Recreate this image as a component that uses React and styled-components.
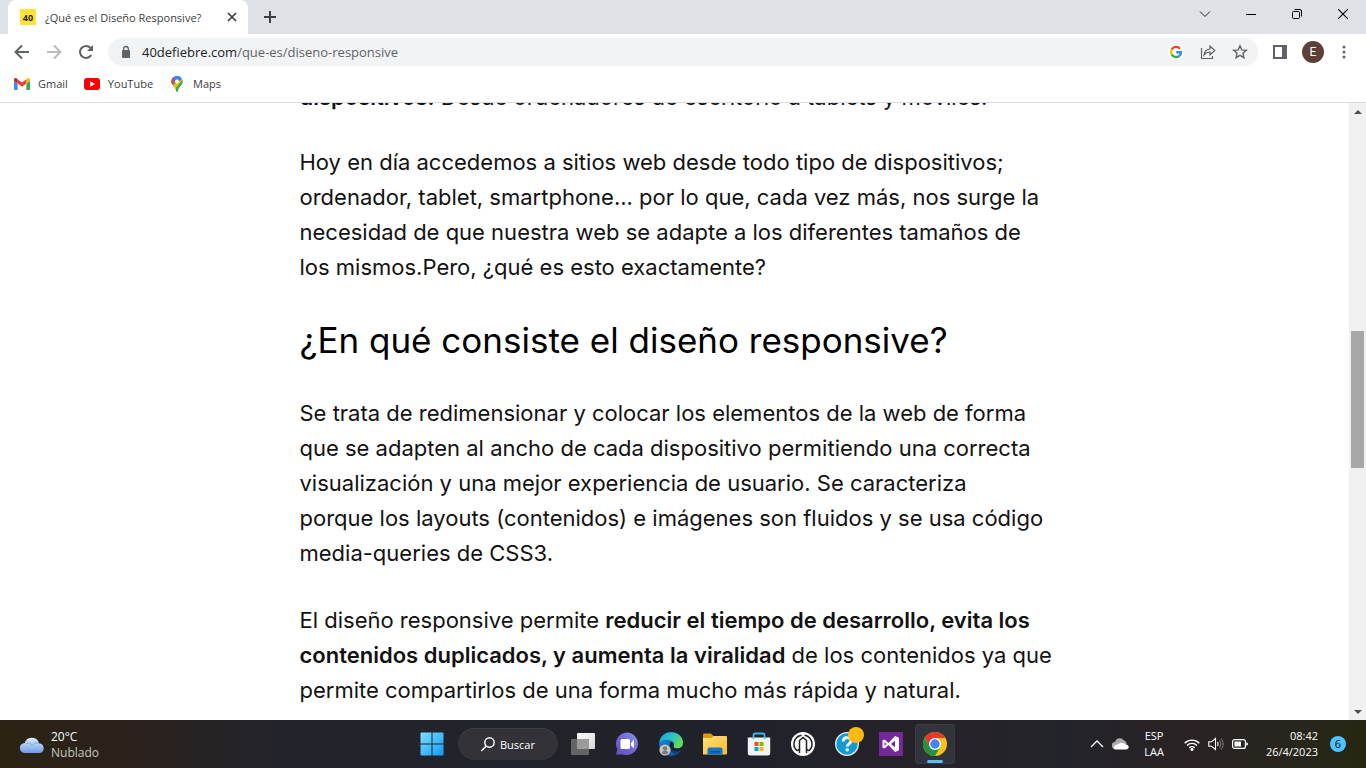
import React from "react";
import styled, { createGlobalStyle } from "styled-components";

const uiFont = '"Open Sans", "Noto Sans", sans-serif';

const Global = createGlobalStyle`
  * { box-sizing: border-box; }
  body { margin: 0; background: #fff; font-family: ${uiFont}; }
  button { border: 0; padding: 0; background: none; font: inherit; color: inherit; }
  svg { display: block; flex: none; }
`;

const Screen = styled.div`
  display: flex;
  flex-direction: column;
  height: 100vh;
  min-height: 400px;
  overflow: hidden;
`;

const TabStrip = styled.header`
  display: flex;
  flex: none;
  height: 34px;
  padding-left: 8px;
  background: #dee1e6;
`;

const Tab = styled.div`
  display: flex;
  align-items: center;
  width: 240px;
  padding: 0 8px 0 12px;
  background: #fff;
  border-radius: 8px 8px 0 0;
  font-size: 11px;
  color: #3c4043;
`;

const Favicon = styled.span`
  display: grid;
  place-items: center;
  width: 16px;
  height: 16px;
  margin-right: 9px;
  background: #ffe234;
  color: #222;
  font: 700 9px ${uiFont};
`;

const TabTitle = styled.span`
  flex: 1;
  white-space: nowrap;
  overflow: hidden;
`;

const IconButton = styled.button`
  display: grid;
  place-items: center;
  flex: none;
  width: ${(p) => p.$w || 32}px;
  height: ${(p) => p.$h || 28}px;
  color: ${(p) => p.$color || "#5f6368"};
`;

const NewTab = styled(IconButton)`
  margin-left: 8px;
  height: 34px;
  width: 28px;
`;

const WindowControls = styled.div`
  display: flex;
  margin-left: auto;
`;

const Toolbar = styled.div`
  display: flex;
  align-items: center;
  flex: none;
  height: 36px;
  padding: 0 0 0 6px;
`;

const Omnibox = styled.div`
  display: flex;
  align-items: center;
  flex: 1;
  height: 28px;
  margin-left: 6px;
  padding: 0 2px 0 12px;
  border-radius: 14px;
  background: #f1f3f4;
`;

const Url = styled.a`
  flex: 1;
  margin-left: 10px;
  font-size: 13px;
  color: #5f6368;
  text-decoration: none;
  white-space: nowrap;
  b { font-weight: 400; color: #202124; }
`;

const Avatar = styled.span`
  display: grid;
  place-items: center;
  width: 22px;
  height: 22px;
  border-radius: 50%;
  background: #5d4037;
  color: #fff;
  font: 12px Roboto, sans-serif;
`;

const Bookmarks = styled.nav`
  display: flex;
  align-items: center;
  flex: none;
  gap: 16px;
  height: 33px;
  padding: 0 14px 4px;
  border-bottom: 1px solid #dadce0;
`;

const Bookmark = styled.a`
  display: flex;
  align-items: center;
  gap: 8px;
  font-size: 11px;
  line-height: 20px;
  color: #3c4043;
  text-decoration: none;
`;

const Viewport = styled.div`
  display: flex;
  flex: 1;
  min-height: 0;
`;

const Page = styled.main`
  flex: 1;
  min-width: 0;
  overflow: hidden;
  background: #fff;
`;

const Article = styled.article`
  max-width: 750px;
  margin: -23px auto 0;
  font-family: Inter, sans-serif;
  color: #121212;
`;

const Paragraph = styled.p`
  margin: 0 0 32px;
  font-size: 22px;
  line-height: 35px;
  white-space: nowrap;
  strong { font-weight: 600; }
`;

const Lead = styled(Paragraph)`
  margin-bottom: 30px;
`;

const Heading = styled.h2`
  margin: 0 0 32px;
  font-size: 35px;
  line-height: 47px;
  font-weight: 400;
  color: #000;
  white-space: nowrap;
`;

const Scrollbar = styled.div`
  display: flex;
  flex-direction: column;
  flex: none;
  width: 17px;
  background: #f1f1f1;
`;

const TrackSpace = styled.div`
  flex: ${(p) => p.$grow} 1 0;
`;

const Thumb = styled.div`
  flex: 137 1 0;
  margin: 0 2px;
  background: #a8a8a8;
`;

const Taskbar = styled.footer`
  display: grid;
  grid-template-columns: 1fr auto 1fr;
  align-items: center;
  flex: none;
  height: 48px;
  background: linear-gradient(90deg, #2b2414 0%, #2a211c 10%, #23242b 20%, #20222b 55%, #272228 68%, #23242b 78%, #2a2224 87%, #262719 97%, #26260f 100%);
  color: #fff;
`;

const Weather = styled.button`
  display: flex;
  align-items: center;
  gap: 6px;
  padding: 2px 0 0 20px;
  text-align: left;
  font-size: 12px;
  line-height: 16px;
  span { display: block; }
  span + span { color: #c8c6c2; }
`;

const Apps = styled.div`
  display: flex;
  align-items: center;
  gap: 4px;
`;

const AppButton = styled.button`
  display: flex;
  flex-direction: column;
  align-items: center;
  justify-content: center;
  width: 40px;
  height: 40px;
  border-radius: 4px;
  background: ${(p) => (p.$active ? "#32343b" : "none")};
  box-shadow: ${(p) => (p.$active ? "inset 0 0 0 1px #3a3c42" : "none")};
`;

const ActiveMark = styled.i`
  width: 16px;
  height: 3px;
  margin: 4px 0 -7px;
  border-radius: 2px;
  background: #4cc2ff;
`;

const Search = styled.button`
  display: flex;
  align-items: center;
  justify-content: center;
  gap: 4px;
  width: 100px;
  height: 32px;
  margin: 0 1px 0 2px;
  border-radius: 16px;
  background: #323238;
  box-shadow: inset 0 1px 0 #3d3d43;
  font-size: 11px;
`;

const Tray = styled.div`
  display: flex;
  align-items: center;
  justify-content: flex-end;
  padding-right: 20px;
  font-size: 11px;
  line-height: 16px;
`;

const TrayGroup = styled.div`
  display: flex;
  align-items: center;
  gap: 8px;
`;

const TrayText = styled.button`
  margin: 0 ${(p) => p.$right}px 0 ${(p) => p.$left}px;
  text-align: ${(p) => p.$align};
  span { display: block; }
`;

const Badge = styled.span`
  display: grid;
  place-items: center;
  width: 16px;
  height: 16px;
  border-radius: 50%;
  background: #4cc2ff;
  color: #111;
`;

const Svg = ({ w = 24, h = w, box, children, ...rest }) => (
  <svg width={w} height={h} viewBox={box || `0 0 ${w} ${h}`} fill="none" aria-hidden="true" {...rest}>
    {children}
  </svg>
);

const BackArrow = () => (
  <Svg w={16} stroke="currentColor" strokeWidth="2"><path d="M15 8H2M8 1.500 1.500 8 8 14.500" /></Svg>
);
const ForwardArrow = () => (
  <Svg w={16} stroke="currentColor" strokeWidth="2"><path d="M1 8h13M8 1.500 14.500 8 8 14.500" /></Svg>
);
const Reload = () => (
  <Svg w={16}>
    <path d="M13.200 11A6 6 0 1 1 12.400 3.800L14 5.400" stroke="currentColor" strokeWidth="2" />
    <path d="M15 1v6H9z" fill="currentColor" />
  </Svg>
);
const Lock = () => (
  <Svg w={12} h={14}>
    <rect x="2" y="5" width="8" height="8" rx="1" fill="#5f6368" />
    <path d="M3.700 5V3.800a2.300 2.300 0 0 1 4.600 0V5" stroke="#5f6368" strokeWidth="1.300" />
  </Svg>
);
const GoogleG = () => (
  <Svg w={16} box="0 0 16 16">
    <circle cx="8" cy="8" r="8" fill="#fff" />
    <g strokeWidth="2.400">
      <path d="M12 4.700A5 5 0 0 0 3.700 5.500" stroke="#ea4335" />
      <path d="M3.700 5.500a5 5 0 0 0 0 5" stroke="#fbbc05" />
      <path d="M3.700 10.500a5 5 0 0 0 7.600 1.300" stroke="#34a853" />
      <path d="M11.300 11.800A5 5 0 0 0 13 8.200H8.200" stroke="#4285f4" />
    </g>
  </Svg>
);
const Share = () => (
  <Svg w={16} stroke="currentColor" strokeWidth="1.200">
    <path d="M1.500 4v10.500h11V12M4 11c.5-4 3-5.800 6-6V2.200L14.800 6.500 10 10.800V8C7.500 8 5.500 9 4 11z" />
  </Svg>
);
const Star = () => (
  <Svg w={16} stroke="currentColor" strokeWidth="1.400">
    <path d="m8 1.800 1.800 4.100 4.500.4-3.400 3 1 4.400L8 11.400l-3.900 2.300 1-4.400-3.400-3 4.500-.4z" />
  </Svg>
);
const SidePanel = () => (
  <Svg w={14}><path d="M0 0h14v14H0zM2 2v10h7V2z" fill="currentColor" fillRule="evenodd" /></Svg>
);
const Dots = () => (
  <Svg w={4} h={14} fill="currentColor"><circle cx="2" cy="2" r="1.500" /><circle cx="2" cy="7" r="1.500" /><circle cx="2" cy="12" r="1.500" /></Svg>
);
const Gmail = () => (
  <Svg w={16} h={12} box="0 0 16 12">
    <path d="M1 12h2.600V5.500L0 2.800V11a1 1 0 0 0 1 1z" fill="#4285f4" />
    <path d="M12.400 12H15a1 1 0 0 0 1-1V2.800l-3.600 2.700z" fill="#34a853" />
    <path d="M12.400 1.300v4.200L16 2.800V1.600C16 .2 14.400-.5 13.300.4z" fill="#fbbc04" />
    <path d="M3.600 5.500V1.300L8 4.600l4.400-3.300v4.200L8 8.800z" fill="#ea4335" />
    <path d="M0 1.600v1.200l3.600 2.700V1.300L2.700.4C1.600-.5 0 .2 0 1.600z" fill="#c5221f" />
  </Svg>
);
const YouTube = () => (
  <Svg w={16} h={12}><rect width="16" height="12" rx="3" fill="#f00" /><path d="M6.200 3.300v5.400L11 6z" fill="#fff" /></Svg>
);
const Maps = () => (
  <Svg w={16} box="0 0 16 16">
    <clipPath id="pin"><path d="M8 0a5.500 5.500 0 0 0-5.500 5.500C2.500 9.500 7 11 7.200 15.200q.8 1.400 1.600 0C9 11 13.500 9.500 13.500 5.500A5.500 5.500 0 0 0 8 0z" /></clipPath>
    <g clipPath="url(#pin)">
      <path d="M0 0h16v16H0z" fill="#34a853" />
      <path d="M0 12 13 0H0z" fill="#1a73e8" />
      <path d="M0 0 8 5 3 10 0 7z" fill="#4285f4" />
      <path d="M0 2 4 1.500 7 4 2 9z" fill="#ea4335" />
      <path d="m3 10.500 8.500-8.500 3 2L6 13z" fill="#fbbc04" />
      <path d="M5 15 14 3v13z" fill="#34a853" />
      <path d="M6 0h7v3L9 6 5 3z" fill="#4285f4" />
    </g>
    <circle cx="8" cy="5.500" r="2" fill="#fff" />
  </Svg>
);
const WeatherCloud = () => (
  <Svg w={25} h={17}>
    <defs><linearGradient id="wc" x1="0" y1="0" x2="0" y2="1"><stop stopColor="#dbe9fb" /><stop offset=".6" stopColor="#9dbdf0" /><stop offset="1" stopColor="#6f9be4" /></linearGradient></defs>
    <path d="M5 16a5 5 0 0 1-.3-10A7.500 7.500 0 0 1 19 6.200 5 5 0 0 1 20 16z" fill="url(#wc)" />
    <path d="M6 6.500c3-1 5 0 6 2 1.500-2 4-3 7-2.300" stroke="#7fa9ea" />
  </Svg>
);
const Windows = () => (
  <Svg w={24}>
    <defs><linearGradient id="win" x1="0" y1="0" x2="1" y2="1"><stop stopColor="#7be0ff" /><stop offset="1" stopColor="#109bf5" /></linearGradient></defs>
    <path d="M.5 1.500A1 1 0 0 1 1.500.5h10v11H.5zM12.500.5h10a1 1 0 0 1 1 1v10h-11zM.5 12.500h11v11h-10a1 1 0 0 1-1-1zM12.500 12.500h11v10a1 1 0 0 1-1 1h-10z" fill="url(#win)" />
  </Svg>
);
const SearchGlyph = () => (
  <Svg w={16} stroke="#fff" strokeWidth="1.500" strokeLinecap="round"><circle cx="9.500" cy="6.500" r="4.700" /><path d="M6 10.200 1.800 14.500" /></Svg>
);
const TaskView = () => (
  <Svg w={24}>
    <defs><linearGradient id="tv" x1="0" y1="0" x2="1" y2="1"><stop stopColor="#fff" /><stop offset="1" stopColor="#d5d5d5" /></linearGradient></defs>
    <rect x="6" y="1" width="18" height="16" rx="1" fill="url(#tv)" />
    <rect x="0" y="7" width="18" height="16" rx="1" fill="#646464" />
    <path d="M6 7h12v10H6z" fill="#9b9b9b" />
  </Svg>
);
const Teams = () => (
  <Svg w={24}>
    <defs><linearGradient id="tm" x1="0" y1="1" x2="1" y2="0"><stop stopColor="#6150c0" /><stop offset=".5" stopColor="#7465cf" /><stop offset="1" stopColor="#7fa3ea" /></linearGradient></defs>
    <path d="M12 .5a11.300 11.300 0 1 1-4 22H1l1.300-5.300A11.300 11.300 0 0 1 12 .5z" fill="url(#tm)" />
    <rect x="5.500" y="7" width="9.500" height="10" rx="1.500" fill="#fff" /><path d="m16 11 3-3.500v9L16 13.500z" fill="#fff" />
  </Svg>
);
const Edge = () => (
  <Svg w={24}>
    <defs>
      <linearGradient id="e1" x1="0" y1="0" x2="1" y2=".6"><stop stopColor="#1b9ce0" /><stop offset=".55" stopColor="#2fc3bf" /><stop offset="1" stopColor="#65de48" /></linearGradient>
      <linearGradient id="e2" x1="0" y1="0" x2="1" y2="1"><stop stopColor="#168bdc" /><stop offset="1" stopColor="#0b53a0" /></linearGradient>
    </defs>
    <circle cx="12" cy="12" r="11.800" fill="url(#e2)" />
    <path d="M.4 10C1.500 3.500 6.500.2 12 .2 19 .2 24 5 24 10.500c0 4-3 6-6 6-2.500 0-4.300-1-3.500-2.500C17 9 8 5 .4 10z" fill="url(#e1)" />
    <path d="M11.500 10c3-.8 4 2 3 4-.7 1.500 1.500 2.800 4 2.600 2-.2 3.200-.8 4.300-1.800-1 3-2.800 5.500-6 7C11 21.500 8 15 11.500 10z" fill="#0c3f80" />
    <path d="M11.500 10.500c2.500-1 4 1.500 3 3.500-.7 1.500 1.500 2.800 4 2.600 2.200 0 4-.8 5.500-2.600v3c-2 2-5 3-8 2.300-4.500-1-6-5.500-4.500-8.800z" fill="#20222b" />
    <circle cx="6" cy="18" r="5.600" fill="#c9c7c5" /><circle cx="6" cy="16.500" r="2.300" fill="#7d7976" /><path d="M2.500 21a3.600 3 0 0 1 7 0q-3.500 2.500-7 0z" fill="#7d7976" />
  </Svg>
);
const Folder = () => (
  <Svg w={24}>
    <defs><linearGradient id="fo" x1="0" y1="0" x2="1" y2="1"><stop stopColor="#ffe07a" /><stop offset="1" stopColor="#fdba26" /></linearGradient></defs>
    <path d="M0 2.500A1 1 0 0 1 1 1.500h7l2.500 2.500-2 4H0z" fill="#d99a10" />
    <path d="M0 6h8l2.500-2H23a1 1 0 0 1 1 1v16.500a1 1 0 0 1-1 1H0z" fill="url(#fo)" />
    <path d="M4.500 22.500V17.500q0-2 2-2h11q2 0 2 2v5z" fill="#1074cb" /><path d="M7 19h10v1.500H7z" fill="#085297" />
  </Svg>
);
const Store = () => (
  <Svg w={24}>
    <path d="M6.500 7V3a1.500 1.500 0 0 1 1.500-1.500h8A1.500 1.500 0 0 1 17.500 3v4" stroke="#35b8f1" strokeWidth="1.800" />
    <path d="M.8 5.500h22.400V21a2.500 2.500 0 0 1-2.500 2.500H3.300A2.500 2.500 0 0 1 .8 21z" fill="#f3f3f3" />
    <path d="M6.500 5.500V7M17.500 5.500V7" stroke="#35b8f1" strokeWidth="1.800" />
    <path d="M7.500 10h4v4h-4z" fill="#f25022" /><path d="M12.500 10h4v4h-4z" fill="#7fba00" /><path d="M7.500 15h4v4h-4z" fill="#00a4ef" /><path d="M12.500 15h4v4h-4z" fill="#ffb900" />
  </Svg>
);
const OmenHub = () => (
  <Svg w={24}>
    <circle cx="12" cy="12" r="12" fill="#fff" />
    <g stroke="#20222b" strokeWidth="1.500">
      <path d="M6 18.800A9 9 0 0 1 10.500 3.200M18 18.800A9 9 0 0 0 13.500 3.200M6 18.800l2.500-1.800V8.500L12 5.500l3.500 3V17l2.500 1.800" />
      <path d="M8.500 17v4M15.500 17v4" />
    </g>
  </Svg>
);
const Help = () => (
  <Svg w={34}>
    <circle cx="17" cy="17" r="11.300" fill="#159bd3" stroke="#e9f4fa" strokeWidth="1.300" />
    <path d="M13.200 14.500c0-5.200 8-4.900 7.800-.6-.1 2.900-3.800 2.900-3.800 5.700" stroke="#fff" strokeWidth="2.800" />
    <circle cx="17.200" cy="22.800" r="1.700" fill="#fff" />
    <circle cx="26" cy="8" r="8" fill="#ffb912" />
  </Svg>
);
const VisualStudio = () => (
  <Svg w={24}>
    <path d="M0 0h24v24H0z" fill="#74289a" />
    <path d="M3.500 8.500 5.500 7.500l4 3.500 6.500-7 4 1.700v12.600L16 20l-6.500-7-4 3.500-2-1zM5.500 10v4l2-2zM16 8.500 12 12l4 3.500z" fill="#fff" fillRule="evenodd" />
  </Svg>
);
const Chrome = () => (
  <Svg w={24}>
    <circle cx="12" cy="12" r="12" fill="#fbc116" />
    <path d="M1.600 6A12 12 0 0 1 22.400 6H12v6l-5.200 3z" fill="#e33b2e" />
    <path d="M1.600 6A12 12 0 0 0 12 24l5.200-9L12 18l-5.200-3z" fill="#229342" />
    <circle cx="12" cy="12" r="6" fill="#fff" /><circle cx="12" cy="12" r="4.700" fill="#4285f4" />
  </Svg>
);
const ChevronUp = () => <Svg w={14} h={8} stroke="#fff" strokeWidth="1.300"><path d="m1 7 6-6 6 6" /></Svg>;
const OneDrive = () => (
  <Svg w={17} h={12}>
    <path d="M3.500 11A3.500 3.500 0 0 1 3 4a5 5 0 0 1 9-1.500C14 3 14.500 5 14.500 6z" fill="#aaa" />
    <path d="M3.500 11.500C1 11 1 8.500 3 7.500L8.500 5c2-.8 4 .2 4.500 1.300 5 .2 4.500 5.200 1 5.200z" fill="#fff" />
  </Svg>
);
const Wifi = () => (
  <Svg w={16} h={13} stroke="#fff" strokeWidth="1.300">
    <path d="M.7 5.200a10.300 10.300 0 0 1 14.600 0M3 7.500a7 7 0 0 1 10 0M5.300 9.700a3.800 3.800 0 0 1 5.400 0" /><circle cx="8" cy="11.300" r="1" fill="#fff" />
  </Svg>
);
const Speaker = () => (
  <Svg w={16} h={14} stroke="#fff" strokeWidth="1.100">
    <path d="M.8 4.800h2.700L7.500 1.500v11L3.500 9.200H.8zM9.500 5q1.300 2 0 4" /><path d="M11.500 3.200q2.300 3.800 0 7.600M13.300 1.500q3.600 5.500 0 11" stroke="#77757a" />
  </Svg>
);
const Battery = () => (
  <Svg w={16} h={10}><rect x=".6" y=".6" width="12.800" height="8.800" rx="2" stroke="#fff" strokeWidth="1.200" /><path d="M2.500 2.500h6.500v5H2.500zM14.300 3.300q1.700 0 1.700 1.700t-1.700 1.700z" fill="#fff" /></Svg>
);

const apps = [
  ["Vista de tareas", TaskView],
  ["Chat", Teams],
  ["Microsoft Edge", Edge],
  ["Explorador de archivos", Folder],
  ["Microsoft Store", Store],
  ["Gaming Hub", OmenHub],
  ["Ayuda", Help],
  ["Visual Studio", VisualStudio],
  ["Google Chrome", Chrome],
];

export default function App() {
  return (
    <Screen>
      <Global />
      <TabStrip>
        <Tab>
          <Favicon>40</Favicon>
          <TabTitle>¿Qué es el Diseño Responsive?</TabTitle>
          <IconButton $w={16} aria-label="Cerrar pestaña">
            <Svg w={10} stroke="#3c4043" strokeWidth="1.700"><path d="m1 1 8 8M9 1 1 9" /></Svg>
          </IconButton>
        </Tab>
        <NewTab aria-label="Nueva pestaña">
          <Svg w={12} stroke="#3c4043" strokeWidth="2"><path d="M6 0v12M0 6h12" /></Svg>
        </NewTab>
        <WindowControls>
          <IconButton $w={46} aria-label="Buscar pestañas">
            <Svg w={12} stroke="#222"><path d="m1 3.500 5 5 5-5" /></Svg>
          </IconButton>
          <IconButton $w={46} aria-label="Minimizar">
            <Svg w={10} stroke="#000"><path d="M0 5.500h10" /></Svg>
          </IconButton>
          <IconButton $w={46} aria-label="Restaurar">
            <Svg w={10} stroke="#000"><rect x=".5" y="2.500" width="7" height="7" rx="1" /><path d="M2.500.5H8A1.500 1.500 0 0 1 9.500 2v5.500" /></Svg>
          </IconButton>
          <IconButton $w={46} aria-label="Cerrar">
            <Svg w={10} stroke="#000" strokeWidth="1.100"><path d="m0 0 10 10M10 0 0 10" /></Svg>
          </IconButton>
        </WindowControls>
      </TabStrip>
      <Toolbar>
        <IconButton aria-label="Atrás"><BackArrow /></IconButton>
        <IconButton $color="#bbbdc0" aria-label="Adelante"><ForwardArrow /></IconButton>
        <IconButton aria-label="Recargar"><Reload /></IconButton>
        <Omnibox>
          <Lock />
          <Url href="#"><b>40defiebre.com</b>/que-es/diseno-responsive</Url>
          <IconButton aria-label="Google"><GoogleG /></IconButton>
          <IconButton aria-label="Compartir"><Share /></IconButton>
          <IconButton aria-label="Marcador"><Star /></IconButton>
        </Omnibox>
        <IconButton $w={44} aria-label="Panel lateral"><SidePanel /></IconButton>
        <IconButton $w={20} aria-label="Perfil"><Avatar>E</Avatar></IconButton>
        <IconButton $w={44} aria-label="Menú"><Dots /></IconButton>
      </Toolbar>
      <Bookmarks>
        <Bookmark href="#"><Gmail />Gmail</Bookmark>
        <Bookmark href="#"><YouTube />YouTube</Bookmark>
        <Bookmark href="#"><Maps />Maps</Bookmark>
      </Bookmarks>
      <Viewport>
        <Page>
          <Article>
            <Lead><strong>dispositivos.</strong> Desde ordenadores de escritorio a tablets y móviles.</Lead>
            <Paragraph>
              Hoy en día accedemos a sitios web desde todo tipo de dispositivos;<br />
              ordenador, tablet, smartphone... por lo que, cada vez más, nos surge la<br />
              necesidad de que nuestra web se adapte a los diferentes tamaños de<br />
              los mismos.Pero, ¿qué es esto exactamente?
            </Paragraph>
            <Heading>¿En qué consiste el diseño responsive?</Heading>
            <Paragraph>
              Se trata de redimensionar y colocar los elementos de la web de forma<br />
              que se adapten al ancho de cada dispositivo permitiendo una correcta<br />
              visualización y una mejor experiencia de usuario. Se caracteriza<br />
              porque los layouts (contenidos) e imágenes son fluidos y se usa código<br />
              media-queries de CSS3.
            </Paragraph>
            <Paragraph>
              El diseño responsive permite <strong>reducir el tiempo de desarrollo, evita los<br />
              contenidos duplicados, y aumenta la viralidad</strong> de los contenidos ya que<br />
              permite compartirlos de una forma mucho más rápida y natural.
            </Paragraph>
          </Article>
        </Page>
        <Scrollbar>
          <IconButton $w={17} $h={17} $color="#505050" aria-label="Subir">
            <Svg w={8} h={4}><path d="M0 4h8L4 0z" fill="currentColor" /></Svg>
          </IconButton>
          <TrackSpace $grow={211} />
          <Thumb />
          <TrackSpace $grow={235} />
          <IconButton $w={17} $h={17} $color="#505050" aria-label="Bajar">
            <Svg w={8} h={4}><path d="M0 0h8L4 4z" fill="currentColor" /></Svg>
          </IconButton>
        </Scrollbar>
      </Viewport>
      <Taskbar>
        <Weather><WeatherCloud /><div><span>20°C</span><span>Nublado</span></div></Weather>
        <Apps>
          <AppButton aria-label="Inicio"><Windows /></AppButton>
          <Search><SearchGlyph />Buscar</Search>
          {apps.map(([name, Icon]) => (
            <AppButton key={name} aria-label={name} $active={Icon === Chrome}>
              <Icon />
              {Icon === Chrome && <ActiveMark />}
            </AppButton>
          ))}
        </Apps>
        <Tray>
          <TrayGroup><ChevronUp /><OneDrive /></TrayGroup>
          <TrayText $left={15} $right={20} $align="center"><span>ESP</span><span>LAA</span></TrayText>
          <TrayGroup><Wifi /><Speaker /><Battery /></TrayGroup>
          <TrayText $left={18} $right={12} $align="right"><span>08:42</span><span>26/4/2023</span></TrayText>
          <Badge>6</Badge>
        </Tray>
      </Taskbar>
    </Screen>
  );
}
